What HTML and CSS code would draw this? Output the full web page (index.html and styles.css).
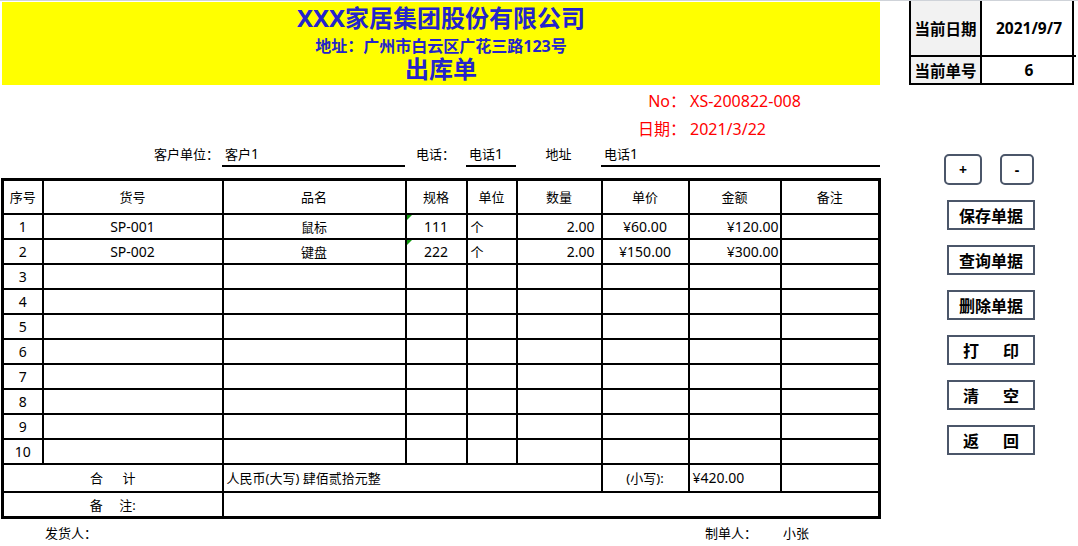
FILE: index.html
```html
<!DOCTYPE html>
<html lang="zh-CN">
<head>
  <meta charset="UTF-8" />
  <meta name="viewport" content="width=device-width, initial-scale=1.0" />
  <title>出库单</title>
  <link rel="stylesheet" href="styles.css">
</head>
<body>
  <div class="page">
    <div class="sheet">
      <div class="banner">
        <div class="company">XXX家居集团股份有限公司</div>
        <div class="address">地址：广州市白云区广花三路123号</div>
        <div class="doc-title">出库单</div>
      </div>

      <div class="doc-meta">
        <span class="meta-label">No：</span><span class="meta-value">XS-200822-008</span>
        <span class="meta-label">日期：</span><span class="meta-value">2021/3/22</span>
      </div>

      <div class="cols customer">
        <span></span>
        <span class="cust-label">客户单位：</span>
        <span class="cust-field">客户<span class="n">1</span></span>
        <span class="cust-label mid">电话：</span>
        <span class="cust-field">电话<span class="n">1</span></span>
        <span class="cust-label mid">地址</span>
        <span class="cust-field">电话<span class="n">1</span></span>
      </div>

      <table class="items">
        <colgroup>
          <col style="width:40px">
          <col style="width:180px">
          <col style="width:183px">
          <col style="width:61px">
          <col style="width:50px">
          <col style="width:85px">
          <col style="width:87px">
          <col style="width:92px">
          <col style="width:99px">
        </colgroup>
        <thead>
          <tr>
            <th>序号</th><th>货号</th><th>品名</th><th>规格</th><th>单位</th>
            <th>数量</th><th>单价</th><th>金额</th><th>备注</th>
          </tr>
        </thead>
        <tbody>
          <tr>
            <td class="c n">1</td><td class="c n">SP-001</td><td class="c">鼠标</td>
            <td class="c n mark">111</td><td>个</td><td class="n qty">2.00</td>
            <td class="c n">¥60.00</td><td class="n amt">¥120.00</td><td></td>
          </tr>
          <tr>
            <td class="c n">2</td><td class="c n">SP-002</td><td class="c">键盘</td>
            <td class="c n mark">222</td><td>个</td><td class="n qty">2.00</td>
            <td class="c n">¥150.00</td><td class="n amt">¥300.00</td><td></td>
          </tr>
          <tr><td class="c n">3</td><td></td><td></td><td></td><td></td><td></td><td></td><td></td><td></td></tr>
          <tr><td class="c n">4</td><td></td><td></td><td></td><td></td><td></td><td></td><td></td><td></td></tr>
          <tr><td class="c n">5</td><td></td><td></td><td></td><td></td><td></td><td></td><td></td><td></td></tr>
          <tr><td class="c n">6</td><td></td><td></td><td></td><td></td><td></td><td></td><td></td><td></td></tr>
          <tr><td class="c n">7</td><td></td><td></td><td></td><td></td><td></td><td></td><td></td><td></td></tr>
          <tr><td class="c n">8</td><td></td><td></td><td></td><td></td><td></td><td></td><td></td><td></td></tr>
          <tr><td class="c n">9</td><td></td><td></td><td></td><td></td><td></td><td></td><td></td><td></td></tr>
          <tr><td class="c n">10</td><td></td><td></td><td></td><td></td><td></td><td></td><td></td><td></td></tr>
          <tr class="total">
            <td class="c" colspan="2">合&emsp;&ensp;计</td>
            <td colspan="4">人民币(大写) 肆佰贰拾元整</td>
            <td class="c">(小写):</td>
            <td class="n">¥420.00</td>
            <td></td>
          </tr>
          <tr class="remark">
            <td class="c" colspan="2">备&emsp;&nbsp;注:</td>
            <td colspan="7"></td>
          </tr>
        </tbody>
      </table>

      <div class="cols signers">
        <span></span>
        <span class="sign">发货人：</span>
        <span></span><span></span><span></span><span></span><span></span>
        <span class="sign maker">制单人：</span>
        <span class="sign">小张</span>
      </div>
    </div>

    <aside class="side">
      <div class="stat">
        <div class="stat-label tall">当前日期</div>
        <div class="stat-value tall">2021/9/7</div>
        <div class="stat-label">当前单号</div>
        <div class="stat-value">6</div>
      </div>

      <div class="tools">
        <div class="step-row">
          <button class="step">+</button>
          <button class="step minus">-</button>
        </div>
        <div class="actions">
          <button class="action">保存单据</button>
          <button class="action">查询单据</button>
          <button class="action">删除单据</button>
          <button class="action">打&emsp;&ensp;印</button>
          <button class="action">清&emsp;&ensp;空</button>
          <button class="action">返&emsp;&ensp;回</button>
        </div>
      </div>
    </aside>
  </div>
</body>
</html>
```

FILE: styles.css
```css
body {
  margin: 0;
  font-family: "Noto Sans", "Noto Sans CJK SC", sans-serif;
  font-size: 13px;
  color: #000;
  background: #fff;
  border-top: 1px solid #cfd3d9;
}
.page {
  display: flex;
  align-items: flex-start;
}
.sheet {
  width: 879px;
  margin-left: 1px;
}
/* latin text runs a bit larger than the cjk text */
.n {
  font-size: 14px;
}
/* yellow title band */
.banner {
  margin: 1px 0 0 1px;
  height: 83px;
  box-sizing: border-box;
  padding-top: 2px;
  background: #ffff00;
  color: #2424cc;
  font-weight: bold;
  text-align: center;
}
.company {
  font-size: 24px;
  line-height: 28px;
}
.address {
  font-size: 16px;
  line-height: 22px;
  margin-top: 3px;
}
.doc-title {
  font-size: 24px;
  line-height: 24px;
}
.doc-meta {
  display: grid;
  grid-template-columns: 685px auto;
  margin-top: 2px;
  line-height: 28px;
  font-size: 16px;
  color: #ff0000;
}
.meta-label {
  text-align: right;
}
.meta-value {
  padding-left: 4px;
}
/* same column grid as the table below */
.cols {
  display: grid;
  grid-template-columns: 41px 180px 183px 61px 50px 85px 87px 92px 100px;
}
.customer {
  line-height: 22px;
}
.customer .cust-field:last-child {
  grid-column: span 3;
}
.cust-label {
  text-align: right;
  padding-right: 3px;
}
.cust-label.mid {
  text-align: center;
  padding-right: 0;
}
.cust-field {
  border-bottom: 2px solid #000;
  padding-left: 3px;
}
.items {
  margin-top: 11px;
  width: 879px;
  table-layout: fixed;
  border-collapse: collapse;
  border: 3px solid #000;
}
.items th,
.items td {
  border: 2px solid #000;
  padding: 0 3px;
  font-weight: normal;
  white-space: nowrap;
}
.items thead tr {
  height: 34px;
}
.items tbody tr {
  height: 25px;
}
.items tr.total {
  height: 28px;
}
.items tr.remark {
  height: 26px;
}
.c {
  text-align: center;
}
.qty {
  text-align: right;
  padding-right: 6px !important;
}
.amt {
  text-align: right;
  padding-right: 1px !important;
}
.mark {
  position: relative;
}
.mark::before {
  content: "";
  position: absolute;
  left: 0;
  top: 0;
  border-top: 5px solid #119911;
  border-right: 5px solid transparent;
}
.signers {
  margin-top: 3px;
  line-height: 22px;
}
.sign {
  padding-left: 3px;
}
.sign.maker {
  padding-left: 17px;
}
/* right side panel */
.side {
  margin-left: 29px;
  width: 165px;
}
.stat {
  display: grid;
  grid-template-columns: 71px 94px;
  border: 2px solid #000;
  border-top: none;
  font-weight: bold;
  font-size: 15.5px;
}
.stat-label,
.stat-value {
  display: flex;
  align-items: center;
  justify-content: center;
  height: 26px;
}
.stat-label {
  background: #f2f2f2;
  border-right: 2px solid #000;
}
.stat-label.tall,
.stat-value.tall {
  height: 54px;
  border-bottom: 2px solid #000;
}
.tools {
  margin-top: 69px;
  padding-left: 35px;
}
.step-row {
  display: flex;
  gap: 18px;
}
button {
  font-family: "Noto Sans", "Noto Sans CJK SC", sans-serif;
  color: #000;
  background: #fff;
  padding: 0;
  cursor: pointer;
  box-sizing: border-box;
}
.step {
  width: 38px;
  height: 31px;
  border: 2px solid #4b5669;
  border-radius: 5px;
  font-size: 14px;
  font-weight: bold;
}
.step.minus {
  width: 34px;
}
.actions {
  display: flex;
  flex-direction: column;
  gap: 15px;
  margin: 15px 0 0 3px;
}
.action {
  width: 88px;
  height: 30px;
  border: 2px solid #4b5669;
  font-size: 16px;
  font-weight: bold;
}
```
